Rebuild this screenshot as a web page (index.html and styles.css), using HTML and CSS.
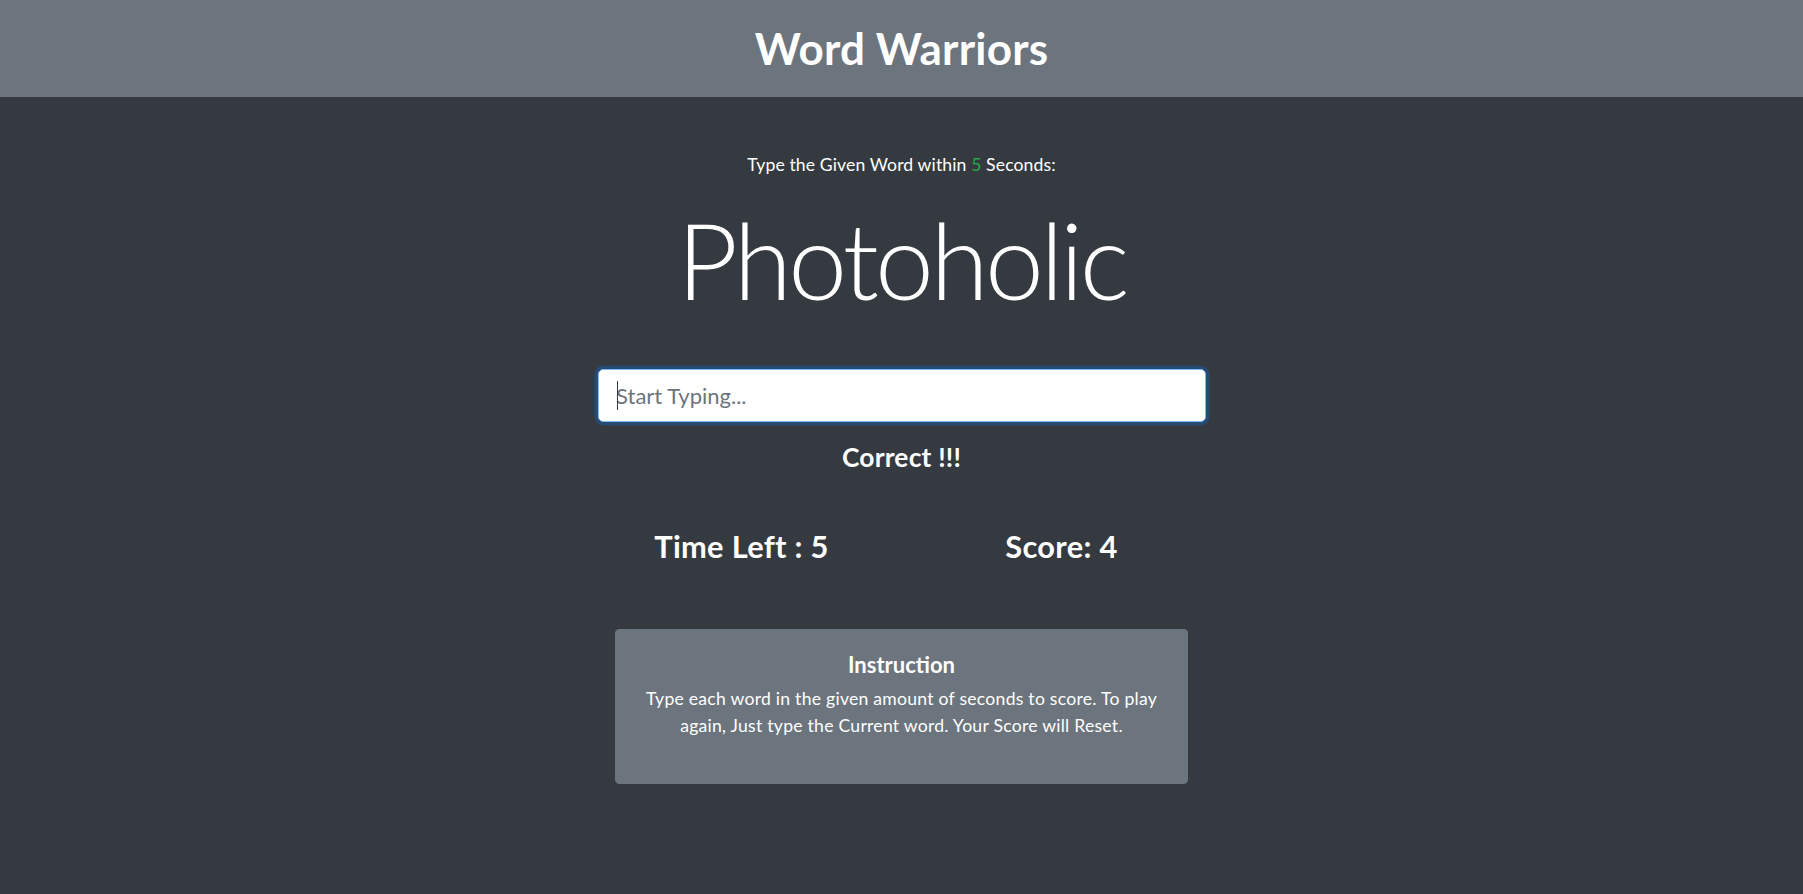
FILE: index.html
```html
<!DOCTYPE html>
<html lang="en">
<head>
<meta charset="utf-8">
<title>Word Warriors</title>
<link rel="stylesheet" href="styles.css">
</head>
<body>
<header class="topbar">
  <h1 class="brand">Word Warriors</h1>
</header>
<main class="game">
  <p class="prompt">Type the Given Word within <span class="secs">5</span> Seconds:</p>
  <h2 class="word">Photoholic</h2>
  <div class="field">
    <input class="word-input" type="text" placeholder="Start Typing...">
    <span class="caret"></span>
  </div>
  <h4 class="message">Correct !!!</h4>
  <div class="stats">
    <h3 class="stat">Time Left : <span>5</span></h3>
    <h3 class="stat">Score: <span>4</span></h3>
  </div>
  <section class="card">
    <h5 class="card-title">Instruction</h5>
    <p class="card-text">Type each word in the given amount of seconds to score. To play again, Just type the Current word. Your Score will Reset.</p>
  </section>
</main>
</body>
</html>
```

FILE: styles.css
```css
* { box-sizing: border-box; }

html, body {
  margin: 0;
  padding: 0;
}

body {
  background: #343a40;
  color: #ffffff;
  font-family: "Lato", "Open Sans", "Noto Sans", sans-serif;
  font-size: 17.6px;
  line-height: 1.5;
  min-height: 894px;
}

.topbar {
  height: 97px;
  background: #6c757d;
  display: flex;
  align-items: center;
  justify-content: center;
}

.brand {
  margin: 0;
  font-size: 44px;
  font-weight: 700;
  line-height: 1.2;
  letter-spacing: 0.2px;
}

.game {
  display: flex;
  flex-direction: column;
  align-items: center;
  text-align: center;
  padding-top: 55px;
}

.prompt {
  margin: 0;
  font-size: 17.6px;
  line-height: 26.4px;
  letter-spacing: 0.12px;
}

.secs { color: #28a745; }

.word {
  margin: 18px 0 0;
  font-size: 105.6px;
  font-weight: 300;
  line-height: 1.2;
  letter-spacing: -3.6px;
}

.field {
  position: relative;
  margin-top: 46px;
  width: 608px;
}

.word-input {
  display: block;
  width: 100%;
  height: 53px;
  padding: 8.8px 17.6px;
  font-family: inherit;
  font-size: 22px;
  color: #495057;
  background: #ffffff;
  border: 1px solid #80bdff;
  border-radius: 5.3px;
  box-shadow: 0 0 0 3.5px rgba(0, 123, 255, 0.25);
  outline: none;
}

.word-input::placeholder { color: #6c757d; opacity: 1; }

.caret {
  position: absolute;
  left: 19px;
  top: 12px;
  width: 1.5px;
  height: 29px;
  background: #343a40;
}

.message {
  margin: 20px 0 0;
  font-size: 26.4px;
  font-weight: 700;
  line-height: 1.2;
  letter-spacing: 0.2px;
}

.stats {
  margin-top: 55px;
  display: grid;
  grid-template-columns: 320px 320px;
}

.stat {
  margin: 0;
  font-size: 30.8px;
  font-weight: 700;
  line-height: 1.2;
  letter-spacing: 0.3px;
}

.card {
  margin-top: 63px;
  width: 573px;
  min-height: 155px;
  background: #6c757d;
  border-radius: 4.4px;
  padding: 23px 22px 45px;
}

.card-title {
  margin: 0 0 8px;
  font-size: 22px;
  font-weight: 700;
  line-height: 1.2;
}

.card-text {
  margin: 0;
  font-size: 17.6px;
  line-height: 26.4px;
  letter-spacing: 0.25px;
}
```
